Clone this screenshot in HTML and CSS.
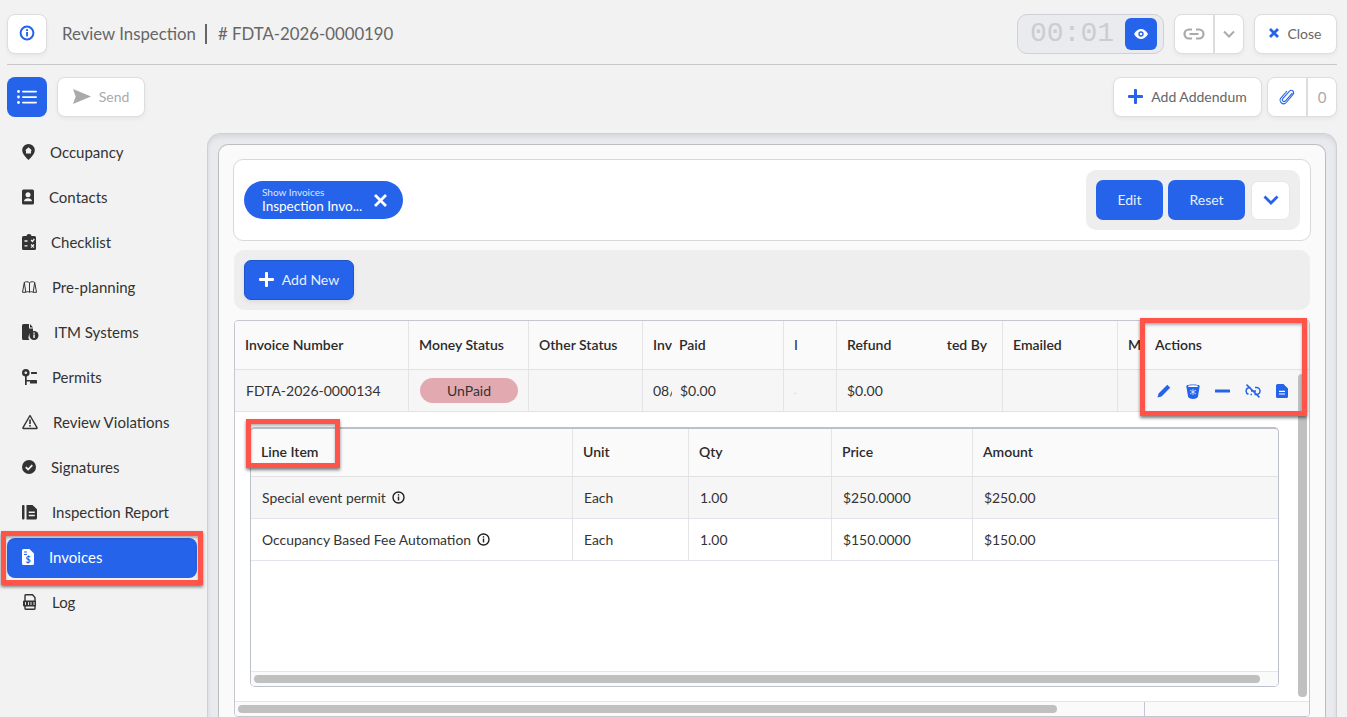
FILE: index.html
```html
<!DOCTYPE html>
<html lang="en">
<head>
    <meta charset="UTF-8">
    <meta name="viewport" content="width=device-width, initial-scale=1.0">
    <title>Review Inspection</title>
    <link rel="stylesheet" href="styles.css">
</head>
<body>
    <header class="topbar">
        <button class="btn btn-square"><svg width="16" height="16" viewBox="0 0 16 16"><circle cx="8" cy="8" r="6.4" fill="none" stroke="#2563eb" stroke-width="2"/><rect x="7.1" y="7" width="1.9" height="4.4" fill="#2563eb"/><rect x="7.1" y="4.2" width="1.9" height="1.8" fill="#2563eb"/></svg></button>
        <div class="page-title">Review Inspection<span class="title-sep"></span># FDTA-2026-0000190</div>
        <div class="timer">
            <span class="timer-digits">00:01</span>
            <button class="timer-eye"><svg width="14" height="10" viewBox="0 0 14 10"><path d="M0 5C2 1.6 4.4 0 7 0s5 1.6 7 5c-2 3.400-4.400 5-7 5S2 8.400 0 5z" fill="#fff"/><circle cx="7" cy="5" r="2.700" fill="#2563eb"/><circle cx="7" cy="5" r="1.300" fill="#fff"/></svg></button>
        </div>
        <div class="btn-group link-group">
            <span class="group-cell cell-link"><svg width="22" height="12" viewBox="0 0 22 12" fill="none" stroke="#aaa" stroke-width="2.200"><path d="M9 1.500H6a4.500 4.500 0 0 0 0 9h3M13 1.500h3a4.500 4.500 0 0 1 0 9h-3M6.500 6h9"/></svg></span>
            <span class="group-cell cell-chevron"><svg width="12" height="8" viewBox="0 0 12 8" fill="none" stroke="#aaa" stroke-width="2"><path d="M1 1.500l5 5 5-5"/></svg></span>
        </div>
        <button class="btn btn-close"><svg width="10" height="10" viewBox="0 0 10 10" stroke="#2563eb" stroke-width="2.700"><path d="M1 1l8 8M9 1l-8 8"/></svg>Close</button>
    </header>

    <div class="subbar">
        <button class="btn-menu"><svg width="20" height="14" viewBox="0 0 20 14" fill="#fff"><circle cx="1.500" cy="1.500" r="1.400"/><circle cx="1.500" cy="7" r="1.400"/><circle cx="1.500" cy="12.500" r="1.400"/><rect x="5" y=".7" width="15" height="1.700" rx=".8"/><rect x="5" y="6.200" width="15" height="1.700" rx=".8"/><rect x="5" y="11.700" width="15" height="1.700" rx=".8"/></svg></button>
        <button class="btn btn-send"><svg width="18" height="15" viewBox="0 0 18 15"><path d="M0 0l18 7.500L0 15l2.700-7.500z" fill="#aaa"/></svg>Send</button>
        <div class="spacer"></div>
        <button class="btn btn-addendum"><svg width="15" height="15" viewBox="0 0 15 15" fill="#2563eb"><rect x="6" y="0" width="3" height="15" rx="1"/><rect x="0" y="6" width="15" height="3" rx="1"/></svg>Add Addendum</button>
        <div class="btn-group attach-group">
            <span class="group-cell cell-clip"><svg width="16" height="16" viewBox="0 0 16 16" fill="none" stroke="#2563eb" stroke-width="1.100"><path d="M13.500 3.800L6.300 12a1.700 1.700 0 0 1-2.500-2.300l6.700-7.500a2.400 2.400 0 0 1 3.600 3.200L7.200 13.500a3.500 3.500 0 0 1-5.200-4.700L8 2"/></svg></span>
            <span class="group-cell cell-count">0</span>
        </div>
    </div>

    <div class="main">
        <nav class="sidebar">
            <a class="nav-item"><svg width="13" height="16" viewBox="0 0 13 16"><path d="M6.500 0a6.300 6.300 0 0 1 6.300 6.300c0 3.500-3.800 7.400-6.300 9.700C4 13.700.2 9.800.2 6.300A6.300 6.300 0 0 1 6.500 0z" fill="#333"/><path d="M6.500 3.300L10 6.500H9v3H4v-3H3z" fill="#f2f2f2"/></svg>Occupancy</a>
            <a class="nav-item"><svg width="12" height="16" viewBox="0 0 12 16"><rect x="0" y="0.500" width="12" height="15" rx="1.500" fill="#333"/><circle cx="6" cy="5.800" r="2.500" fill="#f2f2f2"/><path d="M2 12.300c0-4 8-4 8 0z" fill="#f2f2f2"/></svg>Contacts</a>
            <a class="nav-item"><svg width="14" height="16" viewBox="0 0 14 16"><path d="M1.500 2H4.500a2.500 2 0 0 1 5 0h3A1.500 1.500 0 0 1 14 3.500v11a1.500 1.500 0 0 1-1.500 1.500h-11A1.500 1.500 0 0 1 0 14.500v-11A1.500 1.500 0 0 1 1.500 2z" fill="#333"/><path d="M2.500 7h3M2.500 11.800h3M9 6l1.500 1.500L12.300 5M9 10.500l3 3M12 10.500l-3 3" stroke="#f2f2f2" stroke-width="1.300" fill="none"/></svg>Checklist</a>
            <a class="nav-item"><svg width="15" height="16" viewBox="0 0 15 16" fill="none" stroke="#333" stroke-width="1"><path d="M2.300 3.500C3.500 2.400 6 2.400 7.500 3.800 9 2.400 11.500 2.400 12.700 3.500L14.500 13.300H11.200M2.300 3.500L.5 13.300H3.800"/><path d="M2.300 3.500L3.800 13.300C5 12.500 6.500 12.500 7.500 13.300 8.500 12.500 10 12.500 11.200 13.300L12.700 3.500M7.500 3.800V13.300"/></svg>Pre-planning</a>
            <a class="nav-item"><svg width="17" height="16" viewBox="0 0 17 16"><path d="M1.500 0H7v4.500h4V8a5 5 0 0 0-3.500 8h-6A1.500 1.500 0 0 1 0 14.500v-13A1.500 1.500 0 0 1 1.500 0zM8 0l3 3.500H8z" fill="#333"/><circle cx="12" cy="11.500" r="4.500" fill="#333"/><rect x="11.300" y="10.500" width="1.500" height="3.500" fill="#f2f2f2"/><rect x="11.300" y="8.500" width="1.500" height="1.300" fill="#f2f2f2"/></svg>ITM Systems</a>
            <a class="nav-item"><svg width="15" height="16" viewBox="0 0 15 16" fill="#333"><circle cx="3.800" cy="3.800" r="3.800"/><circle cx="3.800" cy="3.800" r="1.300" fill="#f2f2f2"/><rect x="3" y="6" width="1.700" height="10"/><rect x="4" y="11" width="4" height="1.500"/><rect x="9" y="3" width="6" height="2" rx=".6"/><rect x="8" y="11" width="7" height="3.500" rx=".6"/></svg>Permits</a>
            <a class="nav-item"><svg width="16" height="16" viewBox="0 0 16 16" fill="none"><path d="M8 1.500L15 13.700a.5.500 0 0 1-.4.800H1.400a.5.500 0 0 1-.4-.8z" stroke="#333" stroke-width="1.400" stroke-linejoin="round"/><rect x="7.200" y="5.500" width="1.600" height="4.500" fill="#333"/><rect x="7.200" y="11" width="1.600" height="1.600" fill="#333"/></svg>Review Violations</a>
            <a class="nav-item"><svg width="14" height="16" viewBox="0 0 14 16"><circle cx="7" cy="8" r="7" fill="#333"/><path d="M3.800 8.200l2.300 2.300 4.200-4.400" fill="none" stroke="#f2f2f2" stroke-width="1.800"/></svg>Signatures</a>
            <a class="nav-item"><svg width="15" height="16" viewBox="0 0 15 16"><rect x="0" y="1" width="2.500" height="14.500" rx="1" fill="#333"/><path d="M4.500 1H10.500L15 5.300v8.700a1.500 1.500 0 0 1-1.500 1.500h-9z" fill="#333"/><path d="M6.800 8.300h6M6.800 11.500h6" stroke="#f2f2f2" stroke-width="1.400"/></svg>Inspection Report</a>
            <a class="nav-item active"><svg width="12" height="16" viewBox="0 0 12 16"><path d="M1.500 0H7.500L12 4.500v10a1.500 1.500 0 0 1-1.500 1.500h-9A1.500 1.500 0 0 1 0 14.500v-13A1.500 1.500 0 0 1 1.500 0z" fill="#fff"/><text x="6" y="13.500" font-size="9" font-weight="700" font-family="Lato" text-anchor="middle" fill="#2563eb">$</text><path d="M2 3h3M2 5.500h3" stroke="#2563eb" stroke-width="1"/></svg>Invoices</a>
            <a class="nav-item"><svg width="15" height="16" viewBox="0 0 15 16"><path d="M4 .7h6.500L13 3.500v11A1 1 0 0 1 12 15.300H4A1 1 0 0 1 3 14.500v-13A1 1 0 0 1 4 .7z" fill="none" stroke="#333" stroke-width="1.400"/><rect x="1" y="6.500" width="13" height="6" rx="1" fill="#333"/><path d="M3.500 8v3M6.500 8v3M9 8v3M12 8v3" stroke="#f2f2f2" stroke-width=".9"/></svg>Log</a>
        </nav>

        <section class="panel">
            <div class="panel-inner">
                <div class="filter-card">
                    <div class="chip">
                        <div class="chip-text">
                            <span class="chip-label">Show Invoices</span>
                            <span class="chip-value">Inspection Invo...</span>
                        </div>
                        <svg width="13" height="13" viewBox="0 0 13 13" stroke="#fff" stroke-width="2.800"><path d="M1 1l11 11M12 1L1 12"/></svg>
                    </div>
                    <div class="filter-actions">
                        <button class="btn-blue btn-edit">Edit</button>
                        <button class="btn-blue btn-reset">Reset</button>
                        <button class="btn-more"><svg width="16" height="10" viewBox="0 0 16 10" fill="none" stroke="#2563eb" stroke-width="2.800"><path d="M1.500 1.500L8 8l6.500-6.500"/></svg></button>
                    </div>
                </div>

                <div class="toolbar">
                    <button class="btn-blue btn-add"><svg width="15" height="15" viewBox="0 0 15 15" fill="#fff"><rect x="6" y="0" width="3" height="15" rx="1"/><rect x="0" y="6" width="15" height="3" rx="1"/></svg>Add New</button>
                </div>

                <div class="table-box">
                    <div class="grid-main grid-head">
                        <div class="cell">Invoice Number</div>
                        <div class="cell">Money Status</div>
                        <div class="cell">Other Status</div>
                        <div class="cell no-line">Inv</div>
                        <div class="cell cell-paid">Paid</div>
                        <div class="cell cell-thin">I</div>
                        <div class="cell no-line">Refund</div>
                        <div class="cell cell-end">ted By</div>
                        <div class="cell">Emailed</div>
                        <div class="cell no-line">M</div>
                        <div class="cell no-line">Actions</div>
                    </div>
                    <div class="grid-main grid-row">
                        <div class="cell cell-inv">FDTA-2026-0000134</div>
                        <div class="cell cell-badge"><span class="badge">UnPaid</span></div>
                        <div class="cell"></div>
                        <div class="cell no-line">08/</div>
                        <div class="cell cell-paid">$0.00</div>
                        <div class="cell cell-faint">.</div>
                        <div class="cell no-line">$0.00</div>
                        <div class="cell"></div>
                        <div class="cell"></div>
                        <div class="cell no-line"></div>
                        <div class="cell no-line row-icons">
                            <svg width="14" height="14" viewBox="0 0 14 14" fill="#2563eb"><path d="M10.300.8l2.900 2.900L4.500 12.400.5 13.500l1.100-4z"/></svg>
                            <svg width="14" height="15" viewBox="0 0 14 15" fill="#2563eb"><path d="M.3 2C.3 0 13.700 0 13.700 2L12 12.500c-.4 3.200-9.600 3.200-10 0z"/><ellipse cx="7" cy="2.200" rx="5" ry=".9" fill="#fff"/><path d="M4 6l6 4M10 6l-6 4M7 5v6" stroke="#fff" stroke-width=".7"/></svg>
                            <svg width="15" height="14" viewBox="0 0 15 14" fill="#2563eb"><rect x="0" y="5.500" width="15" height="3" rx=".5"/></svg>
                            <svg width="16" height="14" viewBox="0 0 16 14" fill="none" stroke="#2563eb" stroke-width="1.500"><path d="M5.500 3.500H4.500a3.500 3.500 0 0 0-1 6.800M10 3.500h1.500a3.500 3.500 0 0 1 0 7H9.500M7 10.500H5.500M6 7h5M1.500.6l13 12.800"/></svg>
                            <svg width="12" height="14" viewBox="0 0 12 14"><path d="M1.500 0H7.500L12 4.500v8a1.500 1.500 0 0 1-1.500 1.500h-9A1.500 1.500 0 0 1 0 12.500v-11A1.500 1.500 0 0 1 1.500 0z" fill="#2563eb"/><path d="M3 7.300h6M3 10h6" stroke="#fff" stroke-width="1.200"/></svg>
                        </div>
                    </div>

                    <div class="detail">
                        <div class="detail-box">
                            <div class="grid-sub grid-head-sub">
                                <div class="cell">Line Item</div>
                                <div class="cell">Unit</div>
                                <div class="cell">Qty</div>
                                <div class="cell">Price</div>
                                <div class="cell no-line">Amount</div>
                            </div>
                            <div class="grid-sub grid-row-sub shaded">
                                <div class="cell">Special event permit <svg class="info" width="13" height="13" viewBox="0 0 13 13"><circle cx="6.500" cy="6.500" r="5.500" fill="none" stroke="#222" stroke-width="1.400"/><rect x="5.800" y="5.500" width="1.400" height="4" fill="#222"/><rect x="5.800" y="3.200" width="1.400" height="1.400" fill="#222"/></svg></div>
                                <div class="cell">Each</div>
                                <div class="cell">1.00</div>
                                <div class="cell">$250.0000</div>
                                <div class="cell no-line">$250.00</div>
                            </div>
                            <div class="grid-sub grid-row-sub">
                                <div class="cell">Occupancy Based Fee Automation <svg class="info" width="13" height="13" viewBox="0 0 13 13"><circle cx="6.500" cy="6.500" r="5.500" fill="none" stroke="#222" stroke-width="1.400"/><rect x="5.800" y="5.500" width="1.400" height="4" fill="#222"/><rect x="5.800" y="3.200" width="1.400" height="1.400" fill="#222"/></svg></div>
                                <div class="cell">Each</div>
                                <div class="cell">1.00</div>
                                <div class="cell">$150.0000</div>
                                <div class="cell no-line">$150.00</div>
                            </div>
                            <div class="spacer"></div>
                            <div class="scroll-x sub-scroll"><div class="thumb"></div></div>
                        </div>
                    </div>

                    <div class="scroll-x main-scroll"><div class="thumb"></div><div class="scroll-corner"></div></div>
                    <div class="scroll-y"></div>
                </div>
            </div>
        </section>
    </div>

    <!-- rode markeringer oven paa skaermbilledet -->
    <div class="mark mark-nav"></div>
    <div class="mark mark-actions"></div>
    <div class="mark mark-line"></div>
</body>
</html>
```

FILE: styles.css
```css
* {
    box-sizing: border-box;
}
body {
    margin: 0;
    height: 717px;
    overflow: hidden;
    position: relative;
    background: #f2f2f2;
    font-family: "Lato", "Liberation Sans", sans-serif;
    font-size: 14px;
    color: #333;
    display: flex;
    flex-direction: column;
}
button {
    font-family: inherit;
    padding: 0;
    cursor: pointer;
}
.spacer {
    flex: 1;
}
.btn {
    height: 40px;
    display: flex;
    align-items: center;
    justify-content: center;
    padding-bottom: 1px;
    background: white;
    border: 1px solid #ddd;
    border-radius: 8px;
    box-shadow: 0 2px 4px rgba(0, 0, 0, 0.05);
    font-size: 14px;
    color: #666;
}
.topbar {
    display: flex;
    align-items: center;
    height: 51px;
    margin: 14px 10px 0 7px;
    padding-bottom: 11px;
    border-bottom: 1px solid #c8c8c8;
}
.btn-square {
    width: 40px;
}
.page-title {
    flex: 1;
    display: flex;
    align-items: center;
    margin-left: 15px;
    font-size: 16.800px;
    color: #666;
}
.title-sep {
    width: 2px;
    height: 20px;
    background: #666;
    margin: 0 11px 0 9px;
}
.timer {
    width: 147px;
    height: 40px;
    display: flex;
    align-items: center;
    justify-content: space-between;
    padding: 0 6px 0 12px;
    background: #e9ebef;
    border: 1px solid #cfd1d6;
    border-radius: 10px;
}
.timer-digits {
    font-family: "Liberation Mono", monospace;
    font-size: 28px;
    color: #cbcdd1;
}
.timer-eye {
    width: 32px;
    height: 32px;
    display: flex;
    align-items: center;
    justify-content: center;
    background: #2563eb;
    border: none;
    border-radius: 6px;
}
.btn-group {
    display: flex;
    height: 40px;
    background: white;
    border: 1px solid #ddd;
    border-radius: 8px;
    box-shadow: 0 2px 4px rgba(0, 0, 0, 0.05);
}
.group-cell {
    display: flex;
    align-items: center;
    justify-content: center;
}
.link-group {
    margin-left: 10px;
    width: 70px;
}
.cell-link {
    width: 40px;
    border-right: 2px solid #ddd;
}
.cell-chevron {
    flex: 1;
}
.btn-close {
    width: 83px;
    margin-left: 10px;
    gap: 8px;
}
.subbar {
    display: flex;
    align-items: center;
    height: 40px;
    margin: 12px 10px 0 7px;
}
.btn-menu {
    width: 40px;
    height: 40px;
    display: flex;
    align-items: center;
    justify-content: center;
    background: #2563eb;
    border: none;
    border-radius: 8px;
}
.btn-send {
    width: 88px;
    margin-left: 10px;
    gap: 8px;
    color: #aaa;
}
.btn-addendum {
    width: 149px;
    gap: 8px;
}
.attach-group {
    margin-left: 5px;
    width: 70px;
}
.cell-clip {
    width: 40px;
    border-right: 2px solid #ddd;
}
.cell-count {
    flex: 1;
    font-size: 15px;
    color: #aaa;
}
.main {
    flex: 1;
    display: flex;
    margin-top: 16px;
    min-height: 0;
}
.sidebar {
    width: 207px;
    flex-shrink: 0;
    display: flex;
    flex-direction: column;
    gap: 5px;
    padding-left: 7px;
}
.nav-item {
    width: 190px;
    height: 40px;
    display: flex;
    align-items: center;
    gap: 15px;
    padding: 0 0 2px 15px;
    border-radius: 8px;
    font-size: 15px;
    color: #333;
}
.nav-item.active {
    background: #2563eb;
    color: white;
}
.panel {
    width: 1130px;
    padding: 10px 10px 0;
    background: #e9eaee;
    border: 1px solid #d0d0d4;
    border-bottom: none;
    border-radius: 14px 14px 0 0;
    box-shadow: inset 0 3px 4px rgba(0, 0, 0, 0.08);
}
.panel-inner {
    height: 100%;
    padding: 14px 14px 0;
    background: #fafafa;
    border: 1px solid #bdbdbd;
    border-bottom: none;
    border-radius: 10px 10px 0 0;
    display: flex;
    flex-direction: column;
}
.filter-card {
    height: 82px;
    flex-shrink: 0;
    display: flex;
    align-items: center;
    justify-content: space-between;
    padding: 0 10px;
    background: white;
    border: 1px solid #d8d8d8;
    border-radius: 10px;
}
.chip {
    width: 159px;
    height: 38px;
    display: flex;
    align-items: center;
    justify-content: space-between;
    padding: 0 16px 0 18px;
    background: #2563eb;
    border-radius: 19px;
    color: white;
}
.chip-text {
    display: flex;
    flex-direction: column;
    white-space: nowrap;
}
.chip-label {
    font-size: 10px;
    line-height: 11px;
    color: #dde7fb;
}
.chip-value {
    font-size: 13.500px;
    line-height: 16px;
}
.filter-actions {
    display: flex;
    align-items: center;
    gap: 5px;
    height: 60px;
    padding: 0 10px;
    background: #eeeeee;
    border-radius: 10px;
}
.btn-blue {
    height: 40px;
    padding-bottom: 2px;
    background: #2563eb;
    border: none;
    border-radius: 7px;
    color: #e8eefc;
    font-size: 14px;
    display: flex;
    align-items: center;
    justify-content: center;
}
.btn-edit {
    width: 67px;
}
.btn-reset {
    width: 77px;
}
.btn-more {
    width: 39px;
    height: 39px;
    margin-left: 1px;
    display: flex;
    align-items: center;
    justify-content: center;
    background: white;
    border: 1px solid #e6e6ea;
    border-radius: 7px;
}
.toolbar {
    height: 60px;
    flex-shrink: 0;
    margin: 9px 1px 0;
    padding: 10px;
    background: #eeeeee;
    border-radius: 10px;
}
.btn-add {
    width: 110px;
    gap: 8px;
    box-shadow: 0 2px 4px rgba(0, 0, 0, 0.08);
    border: 1px solid #1f55cc;
}
.table-box {
    flex: 1;
    min-height: 0;
    margin: 10px 1px 0;
    position: relative;
    display: flex;
    flex-direction: column;
    background: white;
    border: 1px solid #c4c7d0;
    border-radius: 4px;
    overflow: hidden;
}
.grid-main {
    display: grid;
    grid-template-columns: 174px 120px 114px 29px 112px 53px 108px 58px 115px 27px 164px;
}
.cell {
    display: flex;
    align-items: center;
    padding-left: 10px;
    border-right: 1px solid #e4e4e6;
    white-space: nowrap;
    overflow: hidden;
    min-width: 0;
}
.no-line {
    border-right: none;
}
.grid-head {
    height: 49px;
    background: #fafafa;
    border-bottom: 1px solid #e2e2e4;
    font-weight: 600;
    color: #2a2a2a;
}
.grid-head .cell,
.grid-head-sub .cell {
    padding-bottom: 2px;
}
.grid-row {
    height: 42px;
    background: #f6f6f6;
    border-bottom: 1px solid #e2e2e6;
    color: #333;
}
.cell-inv {
    padding-left: 11px;
}
.grid-head .cell-paid {
    padding-left: 7px;
}
.grid-row .cell-paid {
    padding-left: 8px;
}
.cell-thin {
    font-weight: 400;
    padding-left: 10px;
}
.cell-faint {
    color: #ccc;
    font-size: 9px;
}
.grid-head .cell-end {
    justify-content: flex-end;
    padding-left: 0;
    padding-right: 15px;
}
.cell-badge {
    padding-left: 11px;
}
.badge {
    width: 98px;
    height: 25px;
    display: flex;
    align-items: center;
    justify-content: center;
    background: #e3a9b1;
    border-radius: 13px;
}
.row-icons {
    gap: 15px;
    padding: 1px 0 0 12px;
}
.detail {
    flex: 1;
    min-height: 0;
    padding: 15px 30px 14px 15px;
    background: white;
}
.detail-box {
    height: 100%;
    display: flex;
    flex-direction: column;
    border: 1px solid #bcc0ca;
    border-top-width: 2px;
    border-radius: 5px;
    overflow: hidden;
}
.grid-sub {
    display: grid;
    grid-template-columns: 322px 116px 143px 141px 305px;
}
.grid-head-sub {
    height: 48px;
    background: #fafafa;
    border-bottom: 1px solid #e2e2e6;
    font-weight: 600;
    color: #2a2a2a;
}
.grid-row-sub {
    height: 42px;
    background: white;
    border-bottom: 1px solid #e2e4ec;
    font-size: 13.900px;
}
.grid-row-sub .cell {
    padding-left: 11px;
}
.grid-row-sub.shaded {
    background: #f6f6f6;
}
.info {
    margin-left: 6px;
}
.scroll-x {
    flex-shrink: 0;
    background: #fafafa;
    border-top: 1px solid #e6e6e6;
    position: relative;
}
.thumb {
    position: absolute;
    height: 8px;
    top: 3px;
    background: #c0c0c0;
    border-radius: 4px;
}
.sub-scroll {
    height: 15px;
}
.sub-scroll .thumb {
    left: 3px;
    width: 1006px;
}
.main-scroll {
    height: 15px;
}
.main-scroll .thumb {
    left: 3px;
    width: 819px;
}
.scroll-corner {
    position: absolute;
    left: 909px;
    top: 0;
    bottom: 0;
    width: 1px;
    background: #c4c7d0;
}
.scroll-y {
    position: absolute;
    top: 53px;
    left: 1063px;
    width: 9px;
    height: 323px;
    background: #c0c0c0;
    border-radius: 4px;
}
.mark {
    position: absolute;
    border: 5px solid #ff5449;
    box-shadow: 0 2px 3px rgba(0, 0, 0, 0.5), inset 0 2px 3px rgba(0, 0, 0, 0.3);
}
.mark-nav {
    left: 1px;
    top: 531px;
    width: 202px;
    height: 54px;
}
.mark-actions {
    left: 1140px;
    top: 318px;
    width: 167px;
    height: 98px;
}
.mark-line {
    left: 246px;
    top: 419px;
    width: 94px;
    height: 49px;
}
```
